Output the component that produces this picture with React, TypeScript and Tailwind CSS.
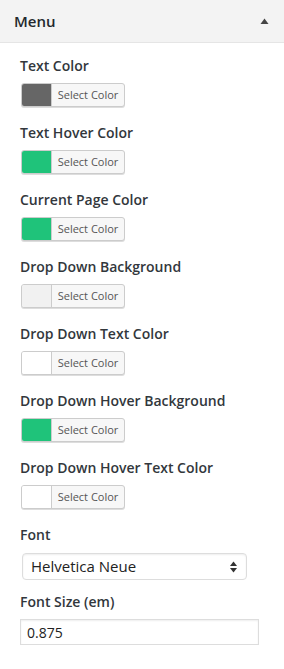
import React from 'react';

const fields = [
  { label: 'Text Color', color: '#666666' },
  { label: 'Text Hover Color', color: '#1fc37a' },
  { label: 'Current Page Color', color: '#1fc37a' },
  { label: 'Drop Down Background', color: '#f1f1f1' },
  { label: 'Drop Down Text Color', color: '#ffffff' },
  { label: 'Drop Down Hover Background', color: '#1fc37a' },
  { label: 'Drop Down Hover Text Color', color: '#ffffff' },
];

function ColorButton({ color }: { color: string }) {
  return (
    <button className="ml-px flex h-6 w-[104px] overflow-hidden rounded-[3px] border border-[#cccccc] bg-[#f7f7f7] p-0 shadow-[0_1px_0_#ddd]">
      <span className="h-full w-[30px] border-r border-[#cccccc]" style={{ backgroundColor: color }} />
      <span className="flex flex-1 items-center justify-center text-[11px] text-[#555]">Select Color</span>
    </button>
  );
}

export default function App() {
  return (
    <div className="w-[284px] h-[669px] bg-white font-['Open_Sans',sans-serif] text-[#32373c]">
      {/* Section header */}
      <div className="flex h-[43px] items-center justify-between border-b border-[#e5e5e5] bg-[#f3f3f3] pl-[14px] pr-[15px]">
        <h3 className="text-[15px] font-semibold text-[#23282d]">Menu</h3>
        <svg width="9" height="7" viewBox="0 0 9 7">
          <path d="M4.5 0.5L8.5 6H0.5Z" fill="#444" />
        </svg>
      </div>

      <div className="pl-5 pt-[13px]">
        {fields.map((f) => (
          <div key={f.label} className="pb-4">
            <div className="text-[14px] font-semibold leading-5">{f.label}</div>
            <div className="mt-[7px]">
              <ColorButton color={f.color} />
            </div>
          </div>
        ))}

        <div className="text-[14px] font-semibold leading-5">Font</div>
        <div className="relative mt-2 ml-[2px] flex h-[27px] w-[225px] items-center rounded-[4px] border border-[#dddddd] bg-white pl-2 text-[15px] text-[#222] shadow-[inset_0_1px_2px_rgba(0,0,0,0.07)]">
          Helvetica Neue
          <svg width="7" height="12" viewBox="0 0 7 12" className="absolute right-[9px] top-[7px]">
            <path d="M3.5 0.5L7 5H0Z" fill="#333" />
            <path d="M3.5 11.5L7 7H0Z" fill="#333" />
          </svg>
        </div>

        <div className="mt-3 text-[14px] font-semibold leading-5">Font Size (em)</div>
        <div className="mt-[7px] flex h-[26px] w-[239px] items-center border border-[#dddddd] bg-white pl-[6px] text-[14px] text-[#222] shadow-[inset_0_1px_2px_rgba(0,0,0,0.07)]">
          0.875
        </div>
      </div>
    </div>
  );
}
